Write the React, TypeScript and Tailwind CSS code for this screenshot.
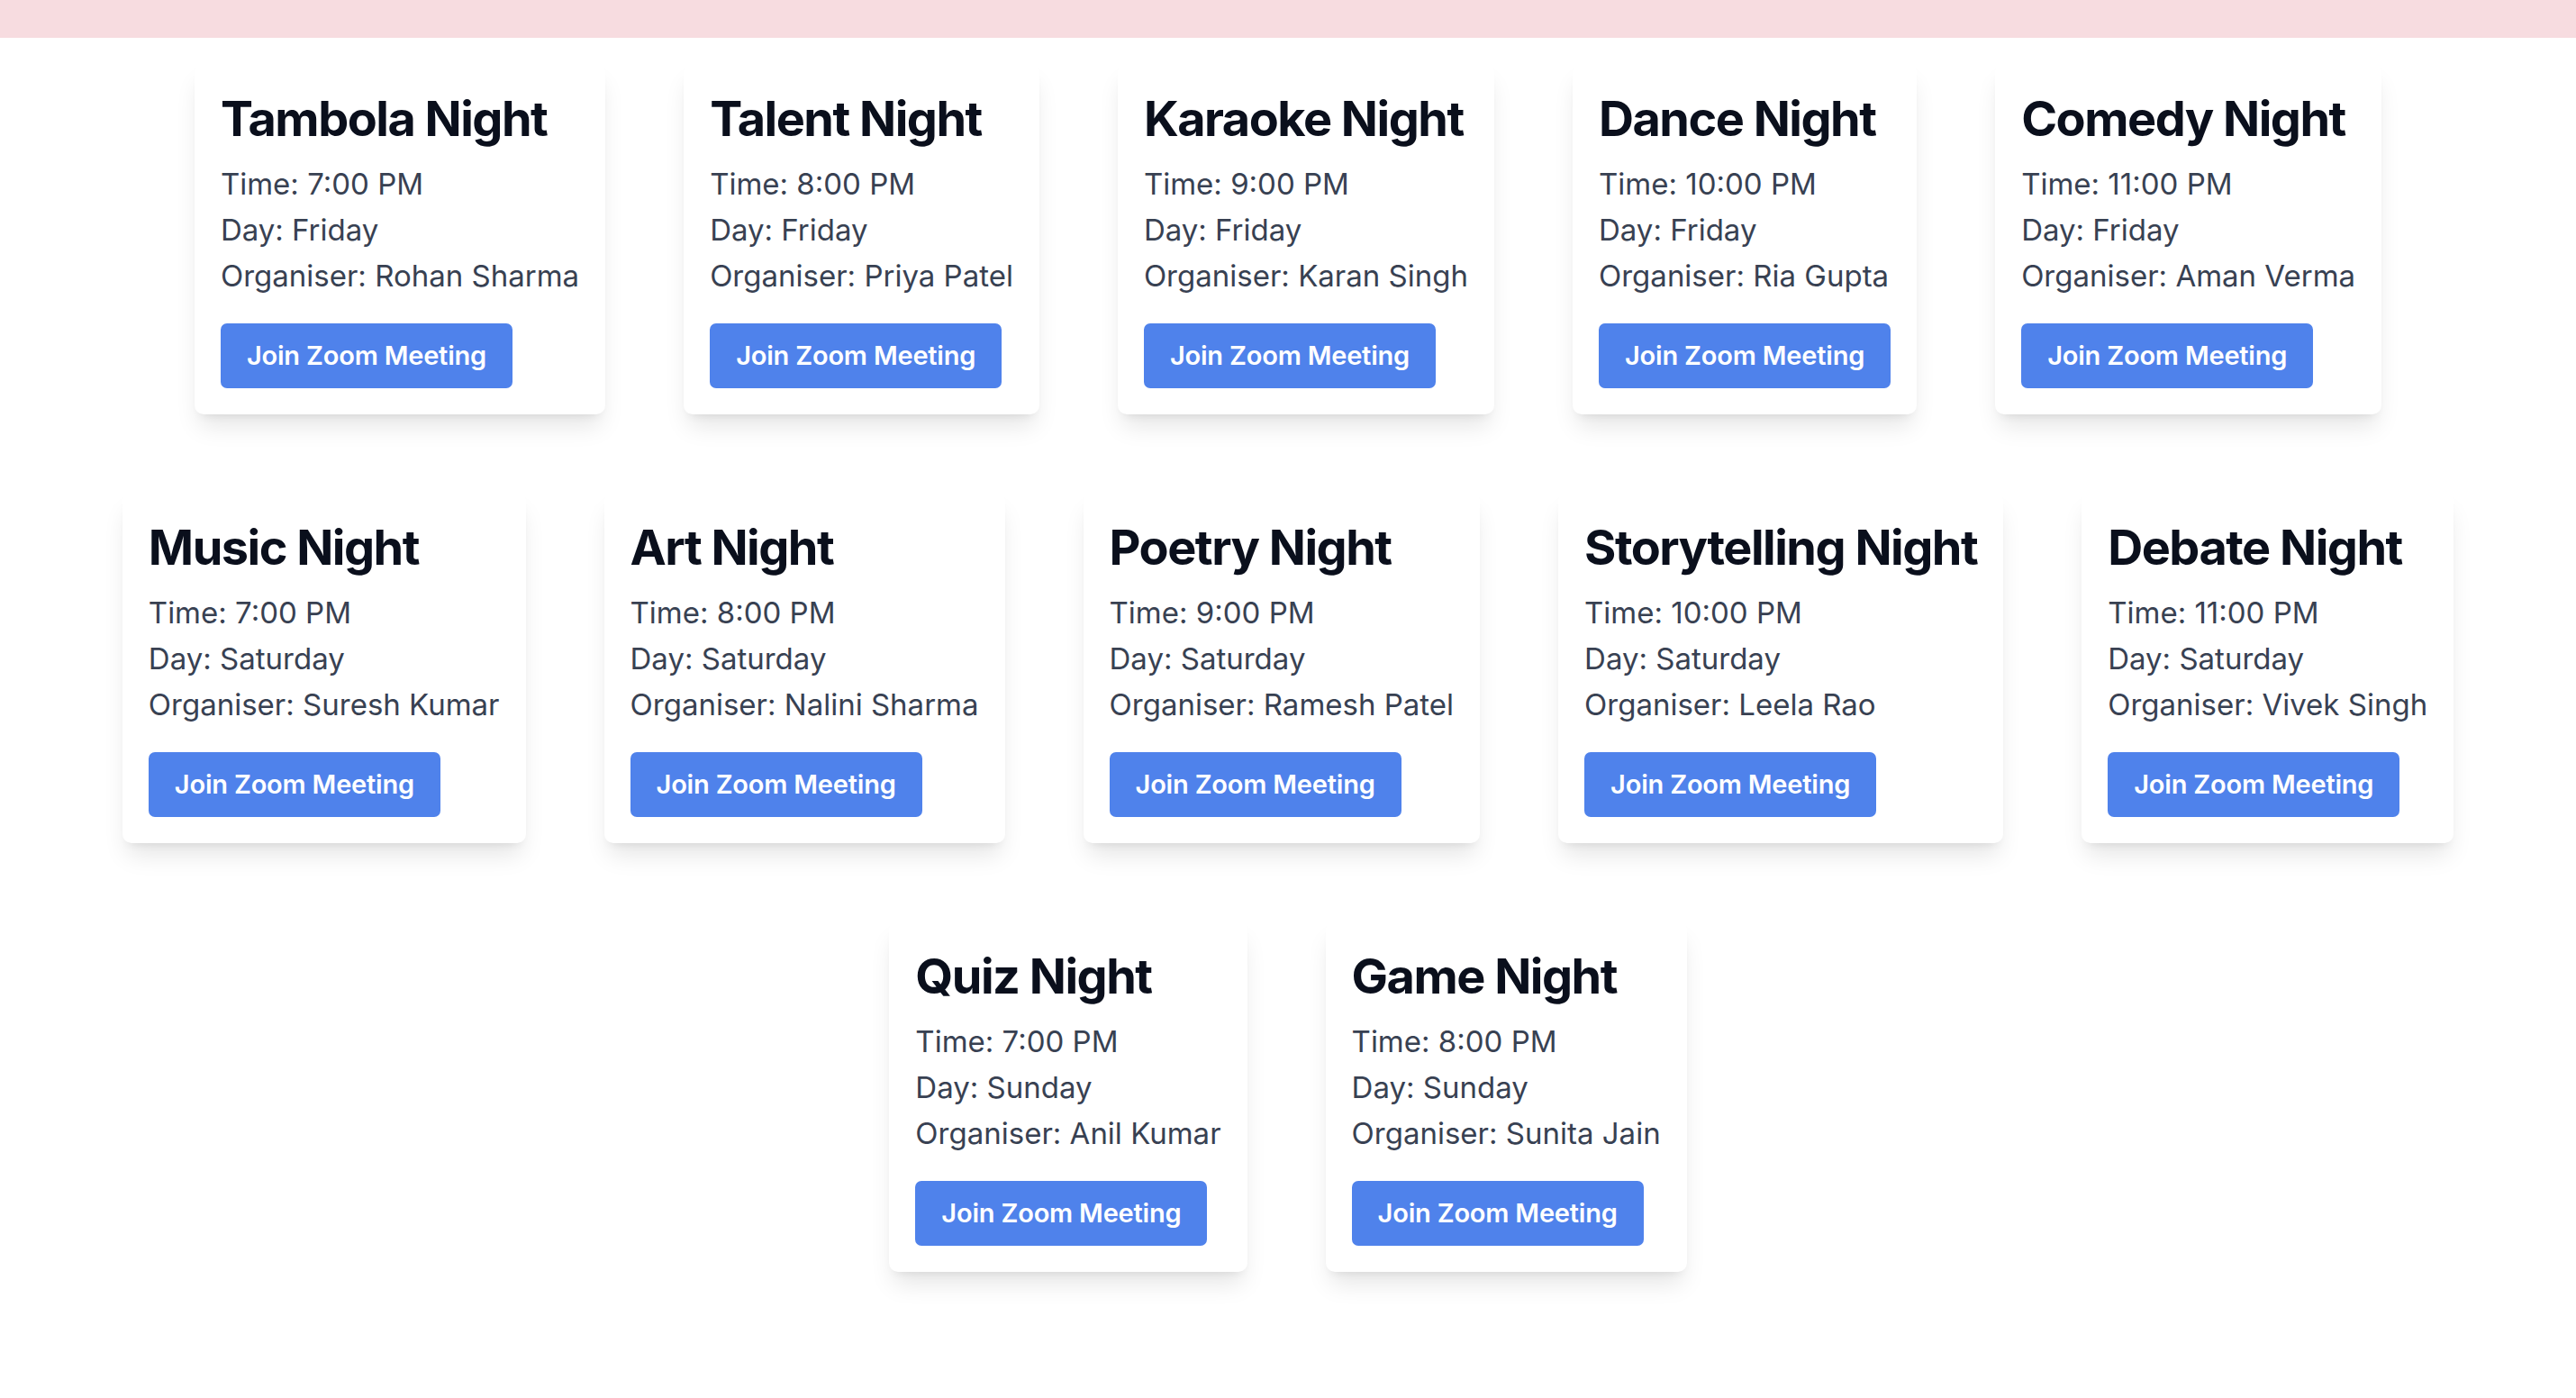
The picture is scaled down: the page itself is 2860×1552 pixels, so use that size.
import React from "react"

type Event = {
  title: string
  time: string
  day: string
  organiser: string
}

const events: Event[] = [
  { title: "Tambola Night", time: "7:00 PM", day: "Friday", organiser: "Rohan Sharma" },
  { title: "Talent Night", time: "8:00 PM", day: "Friday", organiser: "Priya Patel" },
  { title: "Karaoke Night", time: "9:00 PM", day: "Friday", organiser: "Karan Singh" },
  { title: "Dance Night", time: "10:00 PM", day: "Friday", organiser: "Ria Gupta" },
  { title: "Comedy Night", time: "11:00 PM", day: "Friday", organiser: "Aman Verma" },
  { title: "Music Night", time: "7:00 PM", day: "Saturday", organiser: "Suresh Kumar" },
  { title: "Art Night", time: "8:00 PM", day: "Saturday", organiser: "Nalini Sharma" },
  { title: "Poetry Night", time: "9:00 PM", day: "Saturday", organiser: "Ramesh Patel" },
  { title: "Storytelling Night", time: "10:00 PM", day: "Saturday", organiser: "Leela Rao" },
  { title: "Debate Night", time: "11:00 PM", day: "Saturday", organiser: "Vivek Singh" },
  { title: "Quiz Night", time: "7:00 PM", day: "Sunday", organiser: "Anil Kumar" },
  { title: "Game Night", time: "8:00 PM", day: "Sunday", organiser: "Sunita Jain" },
]

function EventCard({ event }: { event: Event }) {
  return (
    <div className="bg-white rounded-[10px] p-[29px] shadow-[0_18px_27px_-5px_rgba(0,0,0,0.1),0_7px_11px_-7px_rgba(0,0,0,0.1)]">
      <h2 className="text-[54px] leading-[65px] font-bold text-[#0a0f1c] mb-[15px] tracking-[-1.5px]">{event.title}</h2>
      <p className="text-[33px] leading-[51px] text-[#384152]">Time: {event.time}</p>
      <p className="text-[33px] leading-[51px] text-[#384152]">Day: {event.day}</p>
      <p className="text-[33px] leading-[51px] text-[#384152]">Organiser: {event.organiser}</p>
      <button className="mt-[27px] bg-[#4f82eb] text-white font-semibold text-[29px] leading-[44px] tracking-[-0.2px] px-[29px] py-[14px] rounded-[7px]">
        Join Zoom Meeting
      </button>
    </div>
  )
}

export default function App() {
  return (
    <div className="min-h-screen bg-white font-['Inter',sans-serif]">
      <div className="h-[42px] bg-[#f7dce0]" />
      <div className="flex flex-wrap justify-center gap-x-[87px] gap-y-[86px] pt-[28px] pb-[80px]">
        {events.map((event) => (
          <EventCard key={event.title} event={event} />
        ))}
      </div>
    </div>
  )
}
